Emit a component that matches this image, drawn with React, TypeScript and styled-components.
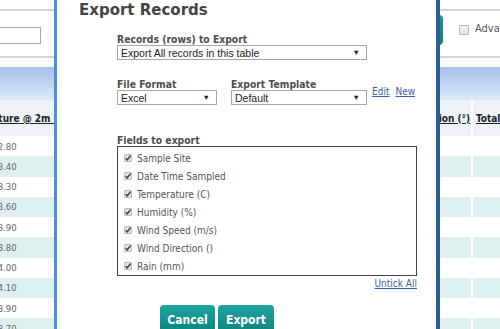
import styled, { createGlobalStyle } from "styled-components";

const GlobalStyle = createGlobalStyle`
  html, body {
    margin: 0;
    padding: 0;
    background: #fff;
  }
  body {
    font-family: "DejaVu Sans Condensed", "DejaVu Sans", sans-serif;
    font-stretch: condensed;
  }
`;

const Page = styled.div`
  position: relative;
  width: 500px;
  height: 329px;
  overflow: hidden;
  background: #fff;
`;

/* ---------- background page ---------- */

const TopBar = styled.div`
  display: flex;
  align-items: flex-start;
  height: 45px;
  margin-top: 9px;
  border-top: 2px solid #d4d4d4;
  border-bottom: 2px solid #d4d4d4;
`;

const SearchBox = styled.div`
  flex: none;
  box-sizing: border-box;
  width: 100px;
  height: 17px;
  margin: 16px 0 0 -59px;
  border: 1px solid #a9a9a9;
  background: #fff;
`;

const SearchButton = styled.div`
  flex: none;
  width: 80px;
  height: 30px;
  margin: 4px 0 0 322px;
  border-radius: 4px;
  background: linear-gradient(#169b96, #0c817d);
`;

const TickBox = styled.div`
  flex: none;
  box-sizing: border-box;
  width: 10px;
  height: 10px;
  margin: 14px 0 0 16px;
  border: 1px solid #b3b3b3;
  border-radius: 2px;
  background: linear-gradient(#f6f6f6, #e3e3e3);
`;

const TickLabel = styled.span`
  flex: none;
  margin: 12px 0 0 6px;
  font-size: 11px;
  line-height: 12px;
  color: #555;
  white-space: nowrap;
`;

const Band = styled.div`
  height: 33px;
  margin-top: 9px;
  background: linear-gradient(#a3c1ea, #dde8f6);
`;

const Grid = styled.div`
  display: grid;
  grid-template-columns: 105px 103px 103px 105px 95px 120px;
  column-gap: 2px;
  margin-left: -48px;
  width: max-content;
  background: #fff;
`;

const HeadCell = styled.div`
  display: flex;
  align-items: center;
  height: 36px;
  padding: 0 3px;
  overflow: hidden;
  background: #edf2f7;
  font-weight: bold;
  font-size: 10px;
  color: #222;
  text-decoration: underline;
  white-space: nowrap;
`;

const Cell = styled.div<{ $alt: boolean }>`
  display: flex;
  align-items: center;
  justify-content: center;
  height: 20.25px;
  background: ${(p) => (p.$alt ? "#ddf0ee" : "#fff")};
  font-size: 9.5px;
  color: #666;
  white-space: nowrap;
`;

/* ---------- modal ---------- */

const Modal = styled.div`
  position: absolute;
  top: 0;
  left: 54px;
  box-sizing: border-box;
  width: 386px;
  height: 360px;
  padding-left: 22px;
  background: #fff;
  border-left: 3px solid #4a8ee2;
  border-right: 4px solid #2f5b93;
`;

const Title = styled.h2`
  margin: 1px 0 0;
  font-family: "DejaVu Sans", sans-serif;
  font-stretch: normal;
  font-size: 15px;
  line-height: 18px;
  font-weight: bold;
  color: #444;
`;

const Form = styled.div`
  display: flex;
  flex-direction: column;
  width: 300px;
  margin-left: 38px;
`;

const Field = styled.div<{ $top?: number }>`
  display: flex;
  flex-direction: column;
  margin-top: ${(p) => p.$top ?? 0}px;
`;

const Label = styled.label`
  font-size: 10.3px;
  line-height: 11px;
  font-weight: bold;
  color: #4d4d4d;
  white-space: nowrap;
`;

const SelectBox = styled.div<{ $width: number }>`
  box-sizing: border-box;
  display: flex;
  align-items: center;
  justify-content: space-between;
  width: ${(p) => p.$width}px;
  height: 15px;
  padding: 0 6px 0 3px;
  border: 1px solid #a6a6a6;
  background: #fff;
  font-family: "Liberation Sans", Arial, sans-serif;
  font-stretch: normal;
  font-size: 10.5px;
  color: #222;
`;

const Arrow = styled.span`
  font-size: 7.5px;
  color: #222;
`;

const Row = styled.div`
  display: flex;
  align-items: flex-end;
  gap: 14px;
  margin-top: 19px;
`;

const Links = styled.div`
  display: flex;
  gap: 6px;
  margin: 0 0 7px -9px;
`;

const Link = styled.a`
  font-size: 10px;
  line-height: 12px;
  color: #3b5eab;
  text-decoration: underline;
  cursor: pointer;
`;

const FieldList = styled.div`
  display: flex;
  flex-direction: column;
  padding: 2px 6px 0;
  border: 1px solid #444;
`;

const FieldItem = styled.div`
  display: flex;
  align-items: center;
  gap: 5px;
  height: 18px;
  font-size: 10px;
  color: #555;
`;

const Check = styled.span`
  box-sizing: border-box;
  display: inline-flex;
  width: 8px;
  height: 8px;
  border: 1px solid #bcbcbc;
  border-radius: 1px;
  background: #e2e2e2;
`;

const Untick = styled(Link)`
  align-self: flex-end;
  margin-top: 2px;
`;

const Buttons = styled.div`
  display: flex;
  gap: 3px;
  margin: 15px 0 0 43px;
`;

const Button = styled.button<{ $width: number }>`
  width: ${(p) => p.$width}px;
  height: 30px;
  padding: 0;
  border: none;
  border-radius: 4px 4px 0 0;
  background: linear-gradient(#1ea49f, #0c807c);
  color: #fff;
  font-family: inherit;
  font-stretch: condensed;
  font-size: 12px;
  font-weight: bold;
`;

const headers = [
  "Temperature @ 2m (C)",
  "Humidity (%)",
  "Wind Speed (m/s)",
  "Wind Gust (m/s)",
  "Wind Direction (°)",
  "Total Rain (mm)",
];

const temps = ["12.80", "13.40", "13.30", "13.60", "13.90", "13.80", "14.00", "14.10", "13.90", "13.70"];

const fields = [
  "Sample Site",
  "Date Time Sampled",
  "Temperature (C)",
  "Humidity (%)",
  "Wind Speed (m/s)",
  "Wind Direction ()",
  "Rain (mm)",
];

const CheckMark = () => (
  <Check>
    <svg width="8" height="8" viewBox="0 0 8 8" style={{ margin: "-1px" }}>
      <path d="M1.6 4.1 L3.2 5.9 L6.6 1.6" fill="none" stroke="#333" strokeWidth="1.4" />
    </svg>
  </Check>
);

export default function App() {
  return (
    <>
      <GlobalStyle />
      <Page>
        <TopBar>
          <SearchBox />
          <SearchButton />
          <TickBox />
          <TickLabel>Advanced Search</TickLabel>
        </TopBar>
        <Band />
        <Grid>
          {headers.map((h) => (
            <HeadCell key={h}>{h}</HeadCell>
          ))}
          {temps.map((t, i) =>
            headers.map((h, c) => (
              <Cell key={h + i} $alt={i % 2 === 1}>
                {c === 0 ? t : ""}
              </Cell>
            ))
          )}
        </Grid>

        <Modal>
          <Title>Export Records</Title>
          <Form>
            <Field $top={15}>
              <Label>Records (rows) to Export</Label>
              <SelectBox $width={250}>
                Export All records in this table<Arrow>▼</Arrow>
              </SelectBox>
            </Field>
            <Row>
              <Field>
                <Label>File Format</Label>
                <SelectBox $width={100}>
                  Excel<Arrow>▼</Arrow>
                </SelectBox>
              </Field>
              <Field>
                <Label>Export Template</Label>
                <SelectBox $width={136}>
                  Default<Arrow>▼</Arrow>
                </SelectBox>
              </Field>
              <Links>
                <Link>Edit</Link>
                <Link>New</Link>
              </Links>
            </Row>
            <Field $top={30}>
              <Label>Fields to export</Label>
              <FieldList>
                {fields.map((f) => (
                  <FieldItem key={f}>
                    <CheckMark />
                    {f}
                  </FieldItem>
                ))}
              </FieldList>
            </Field>
            <Untick>Untick All</Untick>
            <Buttons>
              <Button $width={55}>Cancel</Button>
              <Button $width={56}>Export</Button>
            </Buttons>
          </Form>
        </Modal>
      </Page>
    </>
  );
}
